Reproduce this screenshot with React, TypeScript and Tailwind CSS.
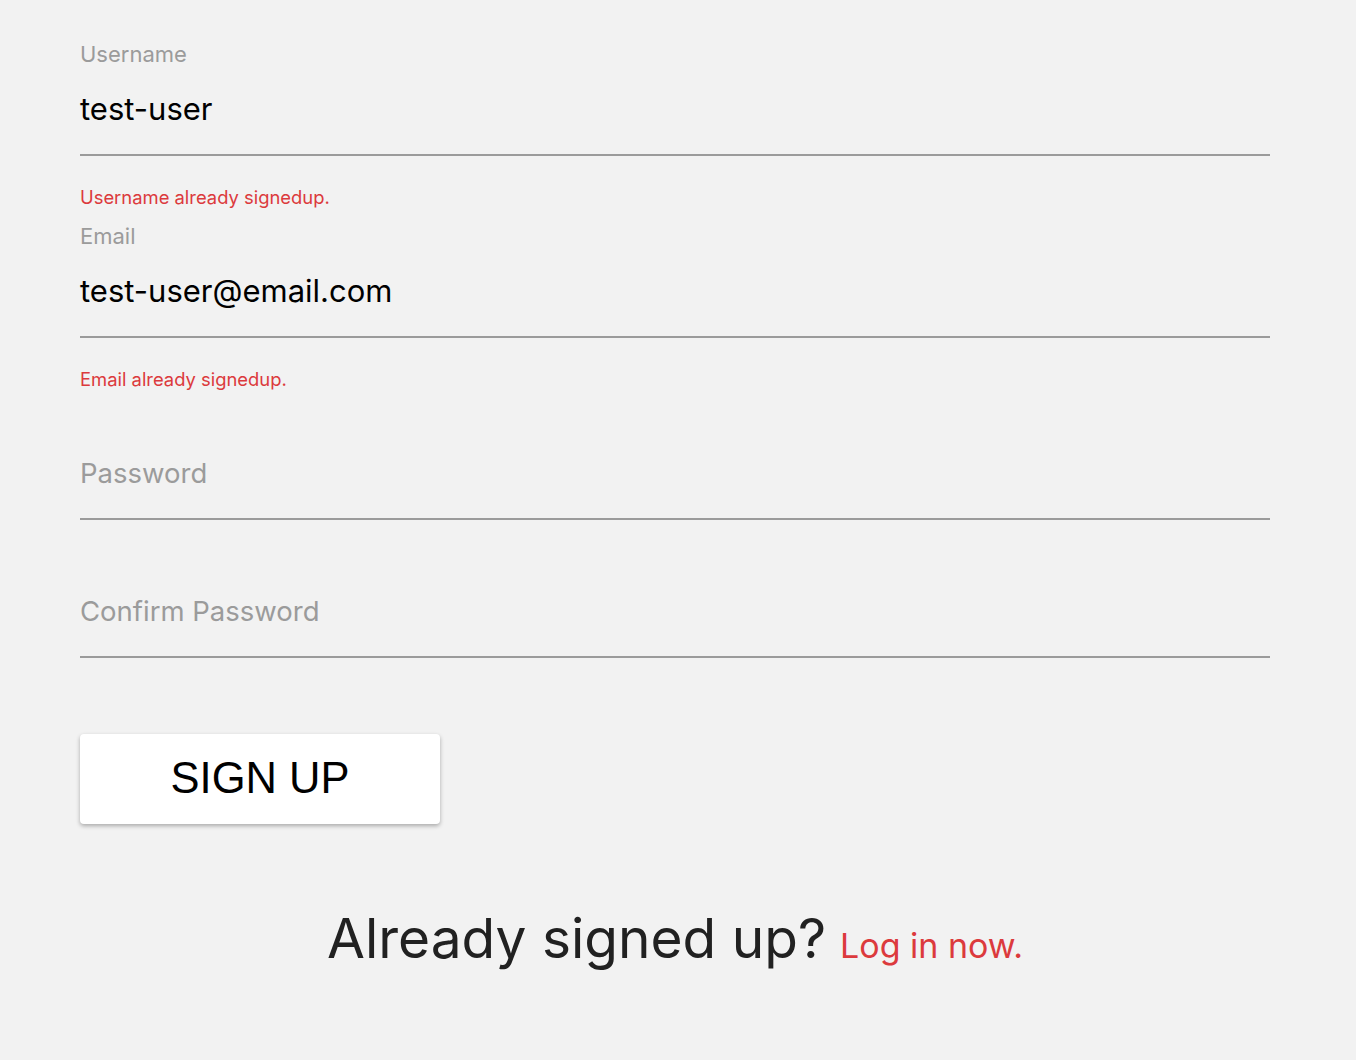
import React from "react";

const font = "font-['Inter',sans-serif]";

function Field({ label, value, placeholder, error }: { label?: string; value?: string; placeholder?: string; error?: string }) {
  return (
    <div className={error ? "" : "mb-4"}>
      <div className="relative h-[122px] border-b-2 border-[#9b9b9b]">
        {label && (
          <div className="absolute left-0 top-[8px] text-[22px] leading-[24px] text-[#9b9b9b]">{label}</div>
        )}
        <div className="absolute left-0 top-[58px] leading-[34px]">
          {value ? (
            <span className="text-[31px] text-black">{value}</span>
          ) : (
            <span className="text-[27.5px] text-[#9b9b9b]">{placeholder}</span>
          )}
        </div>
      </div>
      {error && (
        <div className="h-[60px] pt-[30px] text-[18.4px] leading-[22px] text-[#dc3a3d]">{error}</div>
      )}
    </div>
  );
}

export default function App() {
  return (
    <div className={`min-h-[1060px] w-full bg-[#f2f2f2] ${font}`}>
      <div className="ml-[80px] w-[1190px] pt-[34px]">
        <Field label="Username" value="test-user" error="Username already signedup." />
        <Field label="Email" value="test-user@email.com" error="Email already signedup." />
        <Field placeholder="Password" />
        <Field placeholder="Confirm Password" />
        <button className="mt-[76px] flex h-[90px] w-[360px] items-center justify-center rounded-[4px] bg-white font-['Liberation_Sans',Arial,sans-serif] text-[43.5px] text-black shadow-[0_2px_4px_rgba(0,0,0,0.3)]">
          SIGN UP
        </button>
        <div className="mt-[82px] flex items-baseline justify-center">
          <span className="text-[55px] leading-[64px] text-[#212121]">Already signed up?</span>
          <span className="ml-[14px] text-[34px] text-[#dc3a3d]">Log in now.</span>
        </div>
      </div>
    </div>
  );
}
